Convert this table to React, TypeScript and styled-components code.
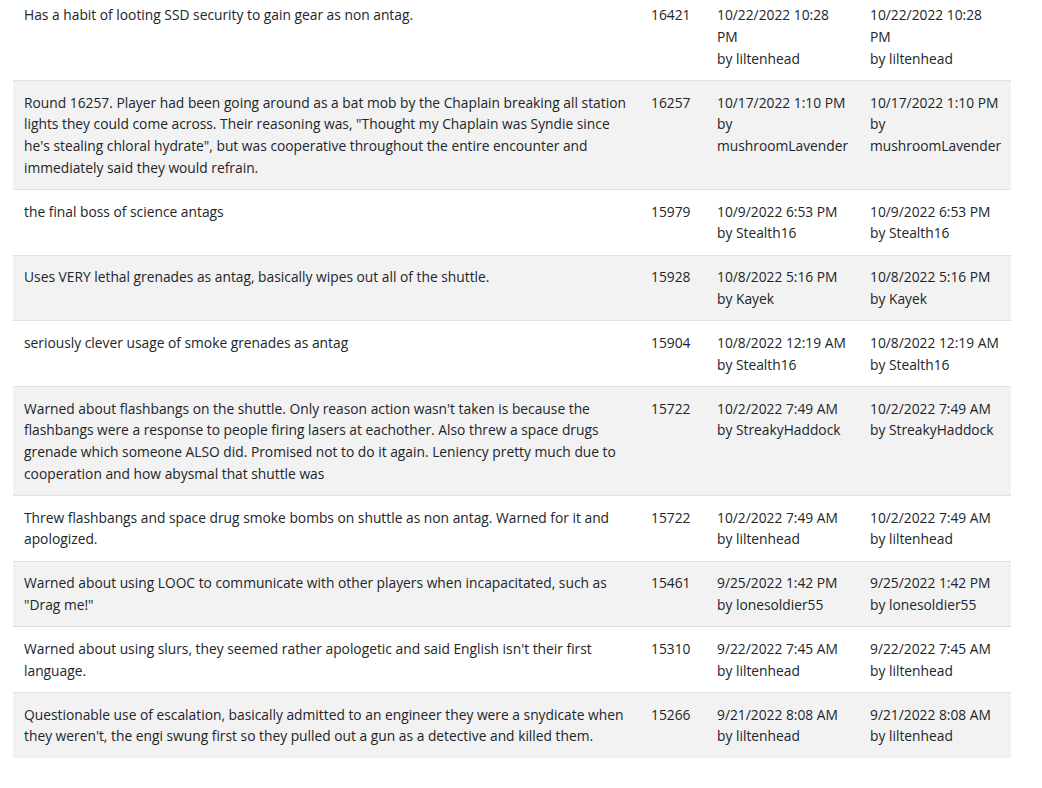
import React from "react";
import styled, { createGlobalStyle } from "styled-components";

const Global = createGlobalStyle`
  html, body { margin: 0; padding: 0; background: #fff; }
  body { font-family: "Open Sans", "Noto Sans", sans-serif; color: #212529; }
`;

const Page = styled.div`
  padding: 0 31px 0 13px;
  margin-top: -7.3px;
`;

const Table = styled.table`
  width: 998px;
  border-collapse: separate;
  border-spacing: 0;
  table-layout: fixed;
  font-size: 13.8px;
  line-height: 21.67px;
`;

const Row = styled.tr<{ $striped: boolean }>`
  background: ${(p) => (p.$striped ? "#f2f2f2" : "#ffffff")};
`;

const Cell = styled.td<{ $w: number }>`
  width: ${(p) => p.$w}px;
  box-sizing: border-box;
  padding: 10.67px 10.5px 10.67px 11px;
  vertical-align: top;
  border-top: 1px solid #dee2e6;
`;

const Line = styled.div`
  white-space: nowrap;
`;

type Entry = { text: string[]; round: string; when: string[] };

const data: Entry[] = [
  { text: ["Has a habit of looting SSD security to gain gear as non antag."], round: "16421", when: ["10/22/2022 10:28", "PM", "by liltenhead"] },
  {
    text: [
      "Round 16257. Player had been going around as a bat mob by the Chaplain breaking all station",
      "lights they could come across. Their reasoning was, \"Thought my Chaplain was Syndie since",
      "he's stealing chloral hydrate\", but was cooperative throughout the entire encounter and",
      "immediately said they would refrain.",
    ],
    round: "16257",
    when: ["10/17/2022 1:10 PM", "by", "mushroomLavender"],
  },
  { text: ["the final boss of science antags"], round: "15979", when: ["10/9/2022 6:53 PM", "by Stealth16"] },
  { text: ["Uses VERY lethal grenades as antag, basically wipes out all of the shuttle."], round: "15928", when: ["10/8/2022 5:16 PM", "by Kayek"] },
  { text: ["seriously clever usage of smoke grenades as antag"], round: "15904", when: ["10/8/2022 12:19 AM", "by Stealth16"] },
  {
    text: [
      "Warned about flashbangs on the shuttle. Only reason action wasn't taken is because the",
      "flashbangs were a response to people firing lasers at eachother. Also threw a space drugs",
      "grenade which someone ALSO did. Promised not to do it again. Leniency pretty much due to",
      "cooperation and how abysmal that shuttle was",
    ],
    round: "15722",
    when: ["10/2/2022 7:49 AM", "by StreakyHaddock"],
  },
  {
    text: ["Threw flashbangs and space drug smoke bombs on shuttle as non antag. Warned for it and", "apologized."],
    round: "15722",
    when: ["10/2/2022 7:49 AM", "by liltenhead"],
  },
  {
    text: ["Warned about using LOOC to communicate with other players when incapacitated, such as", "\"Drag me!\""],
    round: "15461",
    when: ["9/25/2022 1:42 PM", "by lonesoldier55"],
  },
  {
    text: ["Warned about using slurs, they seemed rather apologetic and said English isn't their first", "language."],
    round: "15310",
    when: ["9/22/2022 7:45 AM", "by liltenhead"],
  },
  {
    text: [
      "Questionable use of escalation, basically admitted to an engineer they were a snydicate when",
      "they weren't, the engi swung first so they pulled out a gun as a detective and killed them.",
    ],
    round: "15266",
    when: ["9/21/2022 8:08 AM", "by liltenhead"],
  },
];

const Lines = ({ lines }: { lines: string[] }) => (
  <>
    {lines.map((l, i) => (
      <Line key={i}>{l}</Line>
    ))}
  </>
);

export default function App() {
  return (
    <>
      <Global />
      <Page>
        <Table>
          <tbody>
            {data.map((e, i) => (
              <Row key={i} $striped={i % 2 === 1}>
                <Cell $w={627}>
                  <Lines lines={e.text} />
                </Cell>
                <Cell $w={66}>{e.round}</Cell>
                <Cell $w={153}>
                  <Lines lines={e.when} />
                </Cell>
                <Cell $w={152}>
                  <Lines lines={e.when} />
                </Cell>
              </Row>
            ))}
          </tbody>
        </Table>
      </Page>
    </>
  );
}
